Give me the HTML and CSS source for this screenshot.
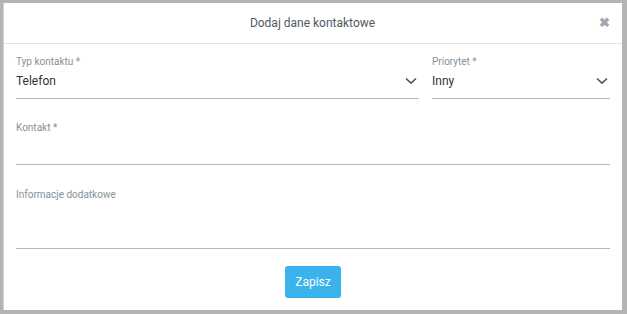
FILE: index.html
```html
<!DOCTYPE html>
<html lang="pl">
<head>
    <meta charset="UTF-8">
    <meta name="viewport" content="width=device-width, initial-scale=1.0">
    <title>Dodaj dane kontaktowe</title>
    <link rel="stylesheet" href="styles.css">
</head>
<body>
    <div class="modal">
        <div class="modal-header">
            <div class="modal-title">Dodaj dane kontaktowe</div>
            <button class="close" type="button">&#10006;</button>
        </div>

        <form class="modal-body">
            <div class="row">
                <div class="field">
                    <label>Typ kontaktu *</label>
                    <div class="control">
                        <span class="value">Telefon</span>
                        <svg class="chevron" width="12" height="8" viewBox="0 0 12 8"><path d="M1 1.5 L6 6.2 L11 1.5" fill="none" stroke="#4b5862" stroke-width="1.6"/></svg>
                    </div>
                </div>
                <div class="field">
                    <label>Priorytet *</label>
                    <div class="control">
                        <span class="value">Inny</span>
                        <svg class="chevron" width="12" height="8" viewBox="0 0 12 8"><path d="M1 1.5 L6 6.2 L11 1.5" fill="none" stroke="#4b5862" stroke-width="1.6"/></svg>
                    </div>
                </div>
            </div>

            <div class="field spaced">
                <label>Kontakt *</label>
                <div class="control"><span class="value"></span></div>
            </div>

            <div class="field spaced">
                <label>Informacje dodatkowe</label>
                <div class="control tall"></div>
            </div>

            <div class="actions">
                <button type="submit" class="btn">Zapisz</button>
            </div>
        </form>
    </div>
</body>
</html>
```

FILE: styles.css
```css
* {
    margin: 0;
    padding: 0;
    box-sizing: border-box;
    font-family: Roboto, 'Liberation Sans', sans-serif;
}

body {
    background: #b4b4b4;
    padding: 3px 5px 4px 3px;
    height: 314px;
}

.modal {
    background: #fff;
    width: 619px;
    height: 307px;
    box-shadow: 1px 0 0 #d2d2d2 inset;
}

.modal-header {
    height: 41px;
    border-bottom: 1px solid #dfe4e7;
    display: flex;
    align-items: center;
    justify-content: center;
    position: relative;
}

.modal-title {
    font-size: 12px;
    color: #4f5a63;
}

.close {
    position: absolute;
    right: 12px;
    top: 12px;
    border: none;
    background: none;
    color: #a0a9b0;
    font-size: 13px;
    font-weight: bold;
    cursor: pointer;
}

.modal-body {
    padding: 12px 12px 0 13px;
}

.row {
    display: grid;
    grid-template-columns: 1fr 178px;
    gap: 13px;
}

.field label {
    display: block;
    font-size: 10px;
    line-height: 12px;
    color: #84919a;
}

.control {
    display: flex;
    align-items: center;
    justify-content: space-between;
    margin-top: 5px;
    height: 26px;
    padding-bottom: 9px;
    border-bottom: 1px solid #aebbc2;
}

.control.tall {
    height: 48px;
    margin-top: 0;
}

.value {
    font-size: 12px;
    line-height: 16px;
    color: #2e3338;
}

.chevron {
    margin-right: 2px;
}

.spaced {
    margin-top: 23px;
}

.spaced + .spaced {
    margin-top: 24px;
}

.actions {
    display: flex;
    justify-content: center;
    margin-top: 17px;
}

.btn {
    background: #3ab2ec;
    color: #fff;
    border: none;
    border-radius: 3px;
    width: 56px;
    height: 32px;
    font-size: 12px;
    font-weight: 400;
    cursor: pointer;
}
```
